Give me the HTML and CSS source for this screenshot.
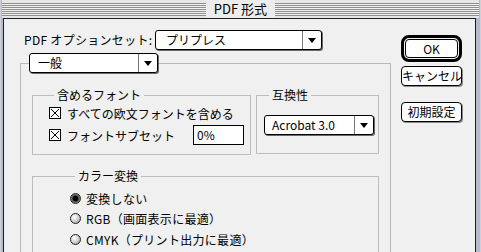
FILE: index.html
```html
<!DOCTYPE html>
<html>

<head lang="ja">
    <meta charset="UTF-8">
    <title>PDF 形式</title>
    <link rel="stylesheet" href="styles.css">
</head>

<body>
    <div class="window">
        <div class="titlebar"><span class="title">PDF 形式</span></div>
        <div class="frame">
            <div class="main">
                <div class="preset-row">
                    <span class="preset-label">PDF オプションセット:</span>
                    <div class="popup popup-preset">
                        <span class="popup-text">プリプレス</span>
                        <span class="popup-arrow"></span>
                    </div>
                </div>
                <!-- 面切り替えのポップアップ -->
                <div class="popup popup-tab">
                    <span class="popup-text">一般</span>
                    <span class="popup-arrow"></span>
                </div>
                <div class="pane">
                    <div class="pane-row">
                        <fieldset class="group group-fonts">
                            <legend>含めるフォント</legend>
                            <div class="check-row first">
                                <span class="checkbox"></span>
                                <span>すべての欧文フォントを含める</span>
                            </div>
                            <div class="check-row">
                                <span class="checkbox"></span>
                                <span>フォントサブセット</span>
                                <span class="field">0%</span>
                            </div>
                        </fieldset>
                        <fieldset class="group group-compat">
                            <legend>互換性</legend>
                            <div class="popup popup-compat">
                                <span class="popup-text">Acrobat 3.0</span>
                                <span class="popup-arrow"></span>
                            </div>
                        </fieldset>
                    </div>
                    <fieldset class="group group-color">
                        <legend>カラー変換</legend>
                        <div class="radio-row first"><span class="radio checked"></span>変換しない</div>
                        <div class="radio-row"><span class="radio"></span>RGB（画面表示に最適）</div>
                        <div class="radio-row"><span class="radio"></span>CMYK（プリント出力に最適）</div>
                    </fieldset>
                </div>
            </div>
            <div class="side">
                <div class="btn-default"><div class="btn">OK</div></div>
                <div class="btn btn-cancel">キャンセル</div>
                <div class="btn btn-reset">初期設定</div>
            </div>
        </div>
    </div>
</body>

</html>
```

FILE: styles.css
```css
* {
    padding: 0;
    margin: 0;
    box-sizing: border-box;
}

body {
    font-family: "Noto Sans CJK JP", "Noto Sans", sans-serif;
    font-size: 12px;
    color: #000;
    background: #ffffff;
}

.window {
    width: 481px;
    height: 252px;
    overflow: hidden;
    background: #b8b8d0;
    border-left: 1px solid #d0d0d8;
    border-right: 1px solid #d0d0d8;
    padding: 0 1px;
}

/* タイトルバーの横縞 */
.titlebar {
    height: 18px;
    text-align: center;
    background-color: #e6e6e6;
    background-image: repeating-linear-gradient(to bottom, #8e8e8e 0, #8e8e8e 1px, #f2f2f2 1px, #f2f2f2 2px);
    background-size: 100% 13px;
    background-position: 0 3px;
    background-repeat: no-repeat;
}

.title {
    display: inline-block;
    height: 18px;
    line-height: 18px;
    padding: 0 8px;
    background: #ececec;
    font-size: 13px;
}

.frame {
    display: flex;
    height: 234px;
    margin: 0 3px 0 1px;
    border: 1px solid #1c1c24;
    border-bottom: none;
    background: #eff0ef;
}

.main {
    width: 387px;
    display: flex;
    flex-direction: column;
}

.preset-row {
    display: flex;
    align-items: center;
    margin-top: 11px;
    padding-left: 20px;
    height: 20px;
}

.preset-label {
    width: 131px;
    line-height: 20px;
    letter-spacing: 0.3px;
}

/* ポップアップメニュー */
.popup {
    display: flex;
    height: 20px;
    background: #ffffff;
    border: 1px solid #000;
    border-radius: 3px;
    box-shadow: 1px 1px 0 #6a6a6a;
}

.popup-text {
    flex: 1;
    line-height: 18px;
    padding-left: 10px;
    white-space: nowrap;
}

.popup-arrow {
    width: 19px;
    border-left: 1px solid #7a7a7a;
    display: flex;
    align-items: center;
    justify-content: center;
}

.popup-arrow::after {
    content: "";
    border-left: 4px solid transparent;
    border-right: 4px solid transparent;
    border-top: 5px solid #000;
}

.popup-preset {
    width: 167px;
}

.popup-tab {
    position: relative;
    z-index: 1;
    width: 129px;
    margin: 3px 0 -10px 25px;
}

.popup-tab .popup-text {
    padding-left: 8px;
}

.pane {
    flex: 1;
    width: 371px;
    margin-left: 16px;
    border: 1px solid #b9b9b9;
    border-bottom: none;
    padding: 24px 0 0 11px;
}

.pane-row {
    display: flex;
    align-items: flex-start;
}

.group {
    border: 1px solid #bdbdbd;
    min-width: 0;
}

.group legend {
    margin-left: 5px;
    padding: 0 3px;
    line-height: 14px;
}

.group-fonts {
    width: 219px;
    height: 67px;
    padding: 0 6px 0 16px;
}

.group-compat {
    width: 123px;
    height: 66px;
    margin-left: 5px;
    padding: 13px 0 0 7px;
}

.popup-compat {
    width: 110px;
}

.popup-compat .popup-text {
    padding-left: 7px;
}

.check-row {
    display: flex;
    align-items: center;
    height: 20px;
    margin-top: 4px;
}

.check-row.first {
    height: 16px;
    margin-top: 3px;
}

/* チェックボックスの × 印 */
.checkbox {
    width: 12px;
    height: 12px;
    margin-right: 6px;
    border: 1px solid #000;
    background-color: #fff;
    background-image: linear-gradient(45deg, transparent 44%, #000 44%, #000 56%, transparent 56%),
        linear-gradient(-45deg, transparent 44%, #000 44%, #000 56%, transparent 56%);
    background-size: 8px 8px;
    background-position: center;
    background-repeat: no-repeat;
}

.field {
    margin-left: auto;
    width: 51px;
    height: 20px;
    line-height: 18px;
    padding-left: 3px;
    border: 1px solid #000;
    background: #fff;
}

.group-color {
    width: 347px;
    height: 120px;
    margin-top: 14px;
    padding-left: 37px;
}

.radio-row {
    display: flex;
    align-items: center;
    height: 20.5px;
    letter-spacing: 0.3px;
}

.radio-row.first {
    margin-top: 5px;
}

.radio {
    width: 11px;
    height: 11px;
    margin-right: 5px;
    border: 1px solid #222;
    border-radius: 50%;
    background: radial-gradient(circle at 35% 35%, #ffffff 0, #d6d6d6 45%, #8a8a8a 100%);
}

.radio.checked {
    background: radial-gradient(circle, #000 0, #000 2.5px, #555 3.2px, #bdbdbd 100%);
}

/* 右側のボタン */
.side {
    flex: 1;
    padding: 16px 0 0 10px;
}

.btn {
    width: 61px;
    height: 20px;
    line-height: 18px;
    text-align: center;
    background: #ffffff;
    border: 1px solid #000;
    border-radius: 4px;
    box-shadow: 1px 1px 0 #8a8a8a;
    white-space: nowrap;
}

.btn-default {
    width: 61px;
    height: 27px;
    padding: 1px;
    border: 3px solid #000;
    border-radius: 8px;
}

.btn-default .btn {
    width: 100%;
    height: 100%;
    line-height: 17px;
    box-shadow: none;
}

.btn-cancel {
    margin-top: 4px;
}

.btn-reset {
    margin-top: 16px;
}
```
